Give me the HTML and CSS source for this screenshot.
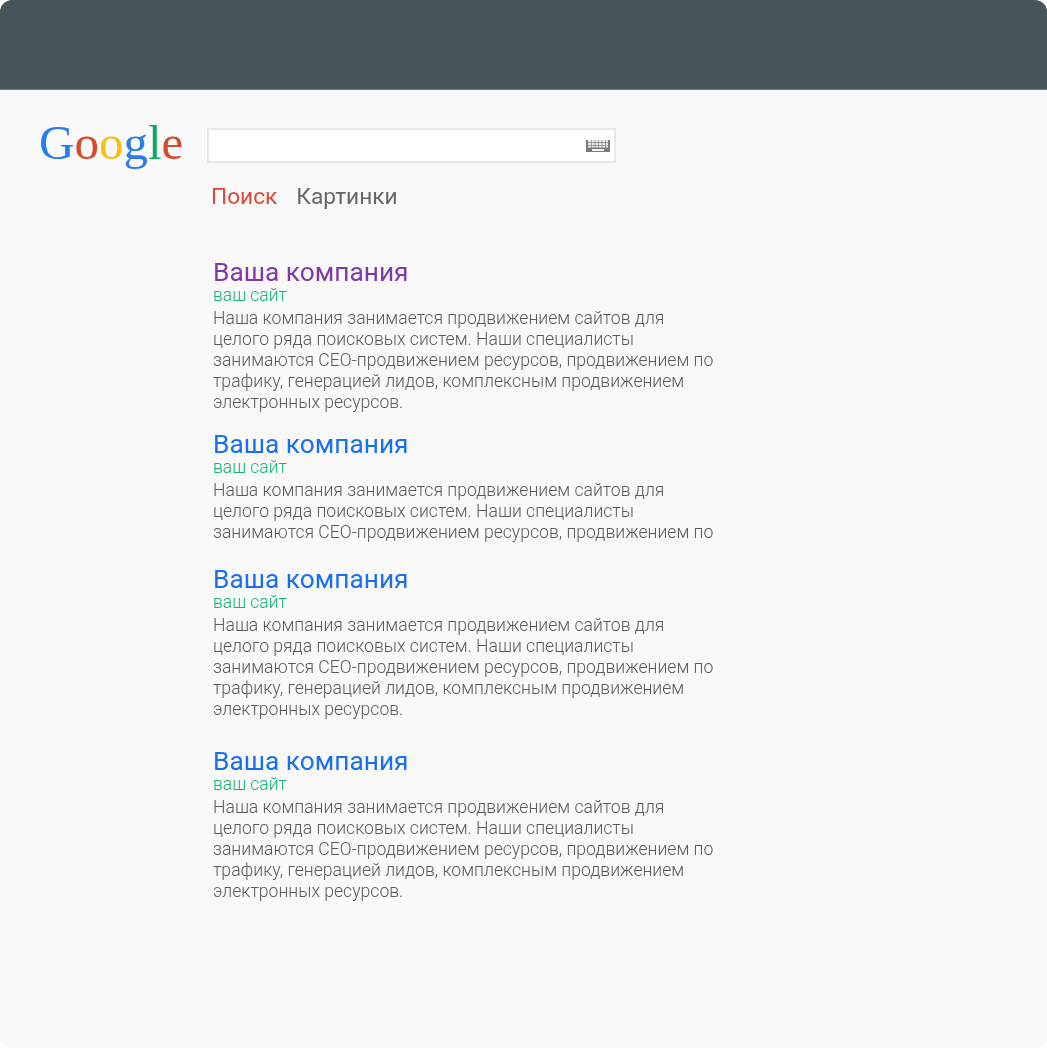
FILE: index.html
```html
<html>

<head>
    <meta charset="utf-8">
    <title>Google</title>
    <link rel="stylesheet" href="styles.css">
</head>

<body>
    <div class="window">
        <div class="topbar"></div>
        <div class="page">
            <div class="search-row">
                <div class="logo"><span class="blue">G</span><span class="red">o</span><span class="yellow">o</span><span class="blue">g</span><span class="green">l</span><span class="red">e</span></div>
                <div class="search-box">
                    <svg class="keyboard" width="24" height="12" viewBox="0 0 24 12">
                        <rect width="24" height="12" fill="#7b7b7b"/>
                        <path d="M2 0h20v7.500h-20z" fill="#ececec"/>
                        <path d="M5.500 0v8M9 0v8M12.500 0v8M16 0v8M19.500 0v8M2 2.500h20M2 5.500h20" stroke="#9a9a9a" stroke-width="1" fill="none"/>
                        <path d="M6 9h12v2h-12z" fill="#f4f4f4"/>
                    </svg>
                </div>
            </div>
            <div class="tabs">
                <span class="tab active">Поиск</span>
                <span class="tab">Картинки</span>
            </div>
            <div class="results">
                <div class="result first">
                    <div class="title visited">Ваша компания</div>
                    <div class="site">ваш сайт</div>
                    <div class="text">Наша компания занимается продвижением сайтов для целого ряда поисковых систем. Наши специалисты занимаются СЕО-продвижением ресурсов, продвижением по трафику, генерацией лидов, комплексным продвижением электронных ресурсов.</div>
                </div>
                <div class="result second">
                    <div class="title">Ваша компания</div>
                    <div class="site">ваш сайт</div>
                    <div class="text">Наша компания занимается продвижением сайтов для целого ряда поисковых систем. Наши специалисты занимаются СЕО-продвижением ресурсов, продвижением по</div>
                </div>
                <div class="result third">
                    <div class="title">Ваша компания</div>
                    <div class="site">ваш сайт</div>
                    <div class="text">Наша компания занимается продвижением сайтов для целого ряда поисковых систем. Наши специалисты занимаются СЕО-продвижением ресурсов, продвижением по трафику, генерацией лидов, комплексным продвижением электронных ресурсов.</div>
                </div>
                <div class="result">
                    <div class="title">Ваша компания</div>
                    <div class="site">ваш сайт</div>
                    <div class="text">Наша компания занимается продвижением сайтов для целого ряда поисковых систем. Наши специалисты занимаются СЕО-продвижением ресурсов, продвижением по трафику, генерацией лидов, комплексным продвижением электронных ресурсов.</div>
                </div>
            </div>
        </div>
    </div>
</body>

</html>
```

FILE: styles.css
```css
html, body{
    margin: 0;
    padding: 0;
    background: #fff;
}

.window{
    width: 1047px;
    height: 1048px;
    display: flex;
    flex-direction: column;
    border-radius: 12px;
    overflow: hidden;
    background: #f9f9f9;
    font-family: Roboto, sans-serif;
}

.topbar{
    height: 89px;
    background: #475459;
    border-bottom: 1px solid #6f7d7c;
}

.page{
    padding: 26px 0 0 39px;
    will-change: transform;
}

.search-row{
    display: flex;
    align-items: flex-start;
}

.logo{
    width: 168px;
    font-family: "Liberation Serif", serif;
    font-size: 49px;
    line-height: 54px;
}

.blue{ color: #2a7bee; }
.red{ color: #d9482f; }
.yellow{ color: #fbbc15; }
.green{ color: #0fa860; }

.search-box{
    width: 401px;
    height: 31px;
    margin-top: 12px;
    padding-right: 4px;
    display: flex;
    align-items: center;
    justify-content: flex-end;
    background: #fff;
    border: 2px solid #e8e8e8;
}

.keyboard{
    margin-top: 1px;
}

.tabs{
    display: flex;
    gap: 19px;
    margin: 12px 0 0 172px;
    font-size: 22.700px;
    line-height: 30px;
    color: #666;
}

.tab.active{
    color: #e0483b;
}

.results{
    margin: 46px 0 0 174px;
    width: 505px;
}

.result.first{ margin-bottom: 17px; }
.result.second{ margin-bottom: 22px; }
.result.third{ margin-bottom: 27px; }

.title{
    margin-bottom: 1px;
    font-size: 26.300px;
    line-height: 28px;
    color: #1a6ff0;
}

.title.visited{
    color: #8039ab;
}

.site{
    font-size: 17.500px;
    font-weight: 300;
    line-height: 16px;
    color: #14b474;
}

.text{
    margin-top: 5px;
    font-size: 17.600px;
    font-weight: 300;
    line-height: 21px;
    color: #5a5a5a;
}
```
